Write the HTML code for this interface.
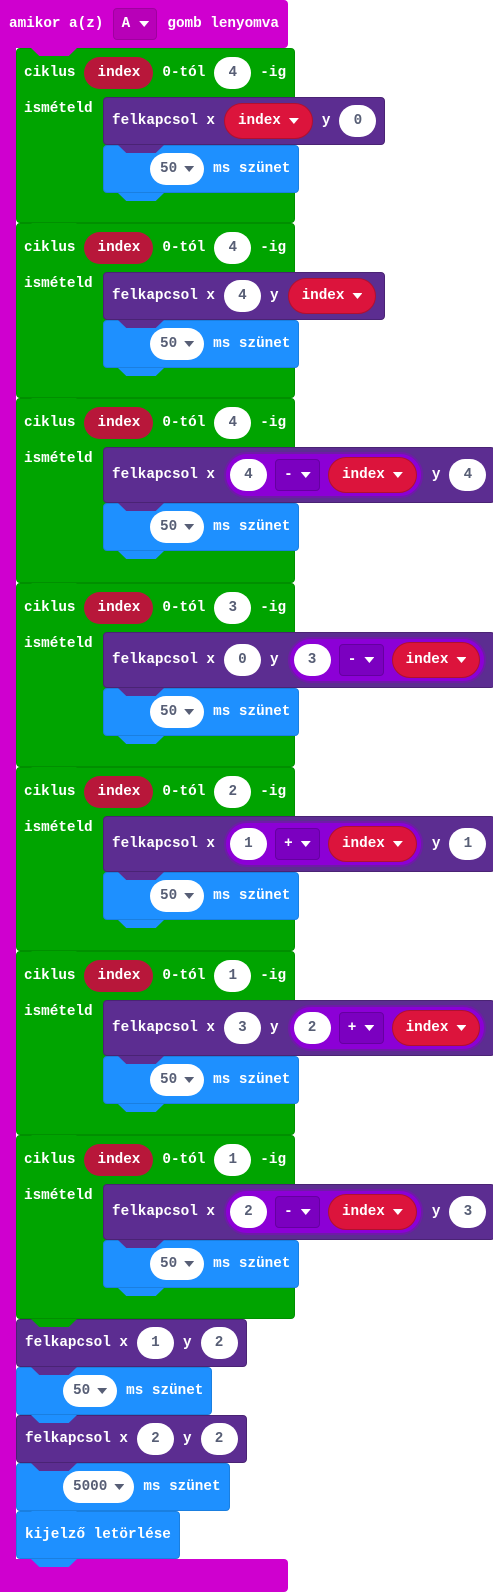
<!DOCTYPE html>
<html><head><meta charset="utf-8"><style>
body{margin:0;width:493px;height:1592px;position:relative;background:#fff;overflow:hidden;font:bold 14.3px "Liberation Mono",monospace;}
.a{position:absolute;box-sizing:border-box}
.b{position:absolute;display:flex;align-items:center;gap:9px;padding:0 8px;box-sizing:border-box;border-radius:4px;color:#fff;white-space:pre}
.pu{background:#5c2d91;border:1px solid #4a2374}
.bl{background:#1e90ff;padding-left:46px;border:1px solid #1a7fe0}
.g{background:#00a400;border-radius:4px;border:1px solid #008f00}
.p{background:#fff;color:#575e75;height:32px;border-radius:16px;display:flex;align-items:center;justify-content:center;min-width:37px;padding:0 10px;box-sizing:border-box;gap:7px}
.v{background:#b8173a;color:#fff;height:32px;border-radius:16px;display:flex;align-items:center;padding:0 13px}
.d{background:#dc143c;color:#fff;height:36px;border-radius:18px;display:flex;align-items:center;padding:0 13px;gap:8px;border:1px solid #b01030;box-sizing:border-box}
.n{background:#8c00d6;border:2px solid #6f1aa8;height:46px;border-radius:23px;display:flex;align-items:center;gap:8px;padding:0 4px;box-sizing:border-box}
.s{background:#7b00c0;border:1px solid #6500a0;height:32px;width:45px;border-radius:4px;display:flex;align-items:center;justify-content:center;gap:8px;box-sizing:border-box}
.t{width:10px;height:6px;display:inline-block;clip-path:polygon(0 0,100% 0,50% 100%);background:currentColor}
.p .t{background:#575e75}
.tab{position:absolute;height:8px;width:46px;clip-path:polygon(0 0,100% 0,82% 100%,18% 100%)}
</style></head><body>
<!-- hat -->
<div class="a" style="left:0;top:0;width:288px;height:48px;background:#cf00cf;border-radius:4px"></div>
<div class="a" style="left:0;top:0;width:16px;height:1592px;background:#cf00cf"></div>
<div class="a" style="left:0;top:1559px;width:288px;height:33px;background:#cf00cf;border-radius:0 4px 4px 0"></div>
<div class="b" style="left:0;top:0;height:48px;gap:10px;padding-left:9px">amikor a(z)<div style="background:#b800b8;border:1px solid #a000a0;height:32px;width:44px;border-radius:4px;display:flex;align-items:center;justify-content:center;gap:9px;box-sizing:border-box">A<span class="t"></span></div>gomb lenyomva</div>

<!-- loops -->
<div class="a g" style="left:16px;top:48px;width:279px;height:175px"></div>
<div class="b" style="left:16px;top:48px;height:49px">ciklus<div class="v">index</div>0-tól<div class="p">4</div>-ig</div>
<div class="b" style="left:16px;top:97px;height:24px">ismételd</div>
<div class="b pu" style="left:103px;top:97px;height:48px">felkapcsol x<div class="d">index<span class="t"></span></div>y<div class="p">0</div></div>
<div class="b bl" style="left:103px;top:145px;height:48px"><div class="p">50<span class="t"></span></div>ms szünet</div>

<div class="a g" style="left:16px;top:223px;width:279px;height:175px"></div>
<div class="b" style="left:16px;top:223px;height:49px">ciklus<div class="v">index</div>0-tól<div class="p">4</div>-ig</div>
<div class="b" style="left:16px;top:272px;height:24px">ismételd</div>
<div class="b pu" style="left:103px;top:272px;height:48px">felkapcsol x<div class="p">4</div>y<div class="d">index<span class="t"></span></div></div>
<div class="b bl" style="left:103px;top:320px;height:48px"><div class="p">50<span class="t"></span></div>ms szünet</div>

<div class="a g" style="left:16px;top:398px;width:279px;height:185px"></div>
<div class="b" style="left:16px;top:398px;height:49px">ciklus<div class="v">index</div>0-tól<div class="p">4</div>-ig</div>
<div class="b" style="left:16px;top:447px;height:24px">ismételd</div>
<div class="b pu" style="left:103px;top:447px;height:56px">felkapcsol x<div class="n"><div class="p">4</div><div class="s">-<span class="t"></span></div><div class="d">index<span class="t"></span></div></div>y<div class="p">4</div></div>
<div class="b bl" style="left:103px;top:503px;height:48px"><div class="p">50<span class="t"></span></div>ms szünet</div>

<div class="a g" style="left:16px;top:583px;width:279px;height:184px"></div>
<div class="b" style="left:16px;top:583px;height:49px">ciklus<div class="v">index</div>0-tól<div class="p">3</div>-ig</div>
<div class="b" style="left:16px;top:632px;height:24px">ismételd</div>
<div class="b pu" style="left:103px;top:632px;height:56px">felkapcsol x<div class="p">0</div>y<div class="n"><div class="p">3</div><div class="s">-<span class="t"></span></div><div class="d">index<span class="t"></span></div></div></div>
<div class="b bl" style="left:103px;top:688px;height:48px"><div class="p">50<span class="t"></span></div>ms szünet</div>

<div class="a g" style="left:16px;top:767px;width:279px;height:184px"></div>
<div class="b" style="left:16px;top:767px;height:49px">ciklus<div class="v">index</div>0-tól<div class="p">2</div>-ig</div>
<div class="b" style="left:16px;top:816px;height:24px">ismételd</div>
<div class="b pu" style="left:103px;top:816px;height:56px">felkapcsol x<div class="n"><div class="p">1</div><div class="s">+<span class="t"></span></div><div class="d">index<span class="t"></span></div></div>y<div class="p">1</div></div>
<div class="b bl" style="left:103px;top:872px;height:48px"><div class="p">50<span class="t"></span></div>ms szünet</div>

<div class="a g" style="left:16px;top:951px;width:279px;height:184px"></div>
<div class="b" style="left:16px;top:951px;height:49px">ciklus<div class="v">index</div>0-tól<div class="p">1</div>-ig</div>
<div class="b" style="left:16px;top:1000px;height:24px">ismételd</div>
<div class="b pu" style="left:103px;top:1000px;height:56px">felkapcsol x<div class="p">3</div>y<div class="n"><div class="p">2</div><div class="s">+<span class="t"></span></div><div class="d">index<span class="t"></span></div></div></div>
<div class="b bl" style="left:103px;top:1056px;height:48px"><div class="p">50<span class="t"></span></div>ms szünet</div>

<div class="a g" style="left:16px;top:1135px;width:279px;height:184px"></div>
<div class="b" style="left:16px;top:1135px;height:49px">ciklus<div class="v">index</div>0-tól<div class="p">1</div>-ig</div>
<div class="b" style="left:16px;top:1184px;height:24px">ismételd</div>
<div class="b pu" style="left:103px;top:1184px;height:56px">felkapcsol x<div class="n"><div class="p">2</div><div class="s">-<span class="t"></span></div><div class="d">index<span class="t"></span></div></div>y<div class="p">3</div></div>
<div class="b bl" style="left:103px;top:1240px;height:48px"><div class="p">50<span class="t"></span></div>ms szünet</div>

<!-- bottom -->
<div class="b pu" style="left:16px;top:1319px;height:48px">felkapcsol x<div class="p">1</div>y<div class="p">2</div></div>
<div class="b bl" style="left:16px;top:1367px;height:48px"><div class="p">50<span class="t"></span></div>ms szünet</div>
<div class="b pu" style="left:16px;top:1415px;height:48px">felkapcsol x<div class="p">2</div>y<div class="p">2</div></div>
<div class="b bl" style="left:16px;top:1463px;height:48px"><div class="p">5000<span class="t"></span></div>ms szünet</div>
<div class="b bl" style="left:16px;top:1511px;height:48px;padding-left:8px">kijelző letörlése</div>

<!-- tabs -->
<div class="tab" style="left:31px;top:48px;background:#cf00cf"></div>
<div class="tab" style="left:118px;top:145px;background:#5c2d91"></div>
<div class="tab" style="left:118px;top:193px;background:#1e90ff"></div>
<div class="tab" style="left:31px;top:223px;background:#00a400"></div>
<div class="tab" style="left:118px;top:320px;background:#5c2d91"></div>
<div class="tab" style="left:118px;top:368px;background:#1e90ff"></div>
<div class="tab" style="left:31px;top:398px;background:#00a400"></div>
<div class="tab" style="left:118px;top:503px;background:#5c2d91"></div>
<div class="tab" style="left:118px;top:551px;background:#1e90ff"></div>
<div class="tab" style="left:31px;top:583px;background:#00a400"></div>
<div class="tab" style="left:118px;top:688px;background:#5c2d91"></div>
<div class="tab" style="left:118px;top:736px;background:#1e90ff"></div>
<div class="tab" style="left:31px;top:767px;background:#00a400"></div>
<div class="tab" style="left:118px;top:872px;background:#5c2d91"></div>
<div class="tab" style="left:118px;top:920px;background:#1e90ff"></div>
<div class="tab" style="left:31px;top:951px;background:#00a400"></div>
<div class="tab" style="left:118px;top:1056px;background:#5c2d91"></div>
<div class="tab" style="left:118px;top:1104px;background:#1e90ff"></div>
<div class="tab" style="left:31px;top:1135px;background:#00a400"></div>
<div class="tab" style="left:118px;top:1240px;background:#5c2d91"></div>
<div class="tab" style="left:118px;top:1288px;background:#1e90ff"></div>
<div class="tab" style="left:31px;top:1319px;background:#00a400"></div>
<div class="tab" style="left:31px;top:1367px;background:#5c2d91"></div>
<div class="tab" style="left:31px;top:1415px;background:#1e90ff"></div>
<div class="tab" style="left:31px;top:1463px;background:#5c2d91"></div>
<div class="tab" style="left:31px;top:1511px;background:#1e90ff"></div>
<div class="tab" style="left:31px;top:1559px;background:#1e90ff"></div>
</body></html>
